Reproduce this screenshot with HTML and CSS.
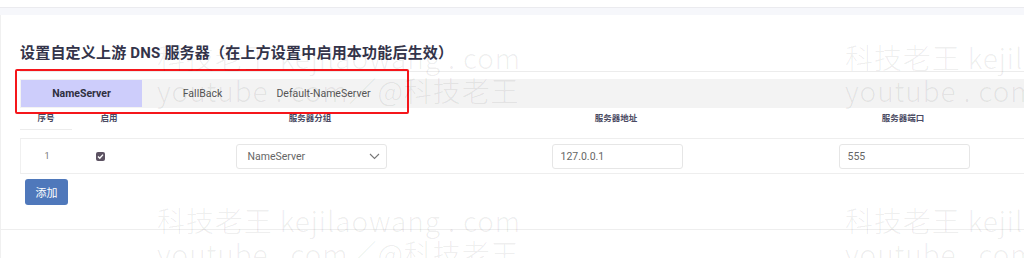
FILE: index.html
```html
<!DOCTYPE html>
<html lang="zh-CN">
<head>
    <meta charset="UTF-8">
    <meta name="viewport" content="width=device-width, initial-scale=1.0">
    <title>上游 DNS 服务器</title>
    <link rel="stylesheet" href="styles.css">
</head>
<body>

    <div class="card card-prev"></div>

    <div class="card card-main">
        <h3 class="section-title">设置自定义上游 DNS 服务器（在上方设置中启用本功能后生效）</h3>

        <div class="tabs-wrap">
            <div class="tabs">
                <div class="tab active">NameServer</div>
                <div class="tab">FallBack</div>
                <div class="tab">Default-NameServer</div>
            </div>
        </div>

        <div class="table">
            <div class="thead">
                <div class="th th-seq">序号</div>
                <div class="th">启用</div>
                <div class="th">服务器分组</div>
                <div class="th">服务器地址</div>
                <div class="th">服务器端口</div>
            </div>
            <div class="row">
                <div class="td td-seq">1</div>
                <div class="td td-check">
                    <span class="checkbox">
                        <svg width="9" height="9" viewBox="0 0 9 9"><path d="M2 4.6 L3.8 6.3 L7 2.6" fill="none" stroke="#fff" stroke-width="1.4"/></svg>
                    </span>
                </div>
                <div class="td">
                    <div class="select">
                        <span>NameServer</span>
                        <svg class="chevron" width="11" height="7" viewBox="0 0 11 7"><path d="M1 1 L5.5 5.5 L10 1" fill="none" stroke="#777" stroke-width="1.1"/></svg>
                    </div>
                </div>
                <div class="td"><input class="field" type="text" value="127.0.0.1"></div>
                <div class="td"><input class="field" type="text" value="555"></div>
            </div>
        </div>

        <button class="btn-add">添加</button>
    </div>

    <div class="card card-next"></div>

    <!-- annotation box round the tabs -->
    <div class="mark-box"></div>

    <!-- watermark layer -->
    <div class="watermark">
        <div class="wm wm-1"><div>科技老王 kejilaowang . com</div><div>youtube . com／@科技老王</div></div>
        <div class="wm wm-2"><div>科技老王 kejilaowang . com</div><div>youtube . com／@科技老王</div></div>
        <div class="wm wm-3"><div>科技老王 kejilaowang . com</div><div>youtube . com／@科技老王</div></div>
        <div class="wm wm-4"><div>科技老王 kejilaowang . com</div><div>youtube . com／@科技老王</div></div>
    </div>

</body>
</html>
```

FILE: styles.css
```css
body {
    margin: 0;
    background-color: #f6f7fb;
    font-family: Roboto, "Noto Sans CJK SC", sans-serif;
    color: #333;
    height: 258px;
    overflow: hidden;
    position: relative;
}

.card {
    background-color: #fff;
    width: 1024px;
    box-sizing: border-box;
    overflow: hidden;
}

.card-prev {
    height: 8px;
    border-bottom: 1px solid #ebebef;
    margin-bottom: 7px;
}

.card-main {
    border-left: 1px solid #f0f0f0;
    border-bottom: 1px solid #eeeeee;
    padding: 28px 0 24px 19px;
}

.card-next {
    height: 40px;
    border-left: 1px solid #f0f0f0;
}

.section-title {
    margin: 0;
    font-size: 15px;
    line-height: 20px;
    font-weight: bold;
    color: #34344a;
    letter-spacing: 0.2px;
}

/* Tabs */
.tabs-wrap {
    margin-top: 8px;
    border-top: 1px solid #ececec;
    padding-top: 7px;
}

.tabs {
    display: flex;
    background-color: #f3f3f3;
    padding: 1px;
    height: 27px;
}

.tab {
    width: 121px;
    display: flex;
    align-items: center;
    justify-content: center;
    font-size: 10.5px;
    color: #555;
}

.tab.active {
    background-color: #cdcdfb;
    color: #2f2f3f;
    font-weight: bold;
}

/* Table */
.table {
    width: 1028px;
}

.thead,
.row {
    display: grid;
    grid-template-columns: 52px 74px 328px 284px 290px;
}

.th {
    height: 21px;
    line-height: 20px;
    text-align: center;
    font-size: 8.5px;
    font-weight: bold;
    color: #4a4a62;
}

.th-seq {
    border-bottom: 1px solid #ececec;
}

.row {
    margin-top: 8px;
    height: 34px;
    border-top: 1px solid #eeeeee;
    border-bottom: 1px solid #eeeeee;
    border-left: 1px solid #f0f0f0;
}

.td {
    display: flex;
    align-items: center;
    justify-content: center;
}

.td-seq {
    font-size: 9px;
    color: #777;
}

.td-check {
    justify-content: flex-start;
    padding-left: 23px;
}

.checkbox {
    width: 9px;
    height: 9px;
    border-radius: 2px;
    background-color: #5c5262;
    display: flex;
}

.select {
    position: relative;
    width: 151px;
    height: 25px;
    box-sizing: border-box;
    border: 1px solid #e6e6e6;
    border-radius: 3px;
    padding-left: 11px;
    display: flex;
    align-items: center;
    font-size: 10.5px;
    color: #666;
}

.chevron {
    position: absolute;
    right: 6px;
    top: 8px;
}

.field {
    width: 131px;
    height: 25px;
    box-sizing: border-box;
    border: 1px solid #e6e6e6;
    border-radius: 3px;
    padding: 0 0 0 8px;
    font-family: Roboto, sans-serif;
    font-size: 10.5px;
    color: #666;
    outline: none;
}

.btn-add {
    margin: 5px 0 0 5px;
    width: 43px;
    height: 26px;
    border: none;
    border-radius: 3px;
    background-color: #4f78bb;
    color: #fff;
    font-family: "Noto Sans CJK SC", sans-serif;
    font-size: 11px;
    padding: 0;
}

/* Red annotation */
.mark-box {
    position: absolute;
    left: 15px;
    top: 69px;
    width: 390px;
    height: 41px;
    border: 2px solid #f5161b;
    border-radius: 2px;
}

/* Watermark */
.watermark {
    position: absolute;
    inset: 0;
    pointer-events: none;
}

.wm {
    position: absolute;
    font-family: "Noto Sans CJK SC", sans-serif;
    font-weight: 300;
    font-size: 28px;
    line-height: 33px;
    letter-spacing: 0.9px;
    color: rgba(0, 0, 0, 0.07);
    white-space: nowrap;
}

.wm-1 { left: 157px; top: 41px; }
.wm-2 { left: 845px; top: 41px; }
.wm-3 { left: 157px; top: 204px; }
.wm-4 { left: 845px; top: 204px; }
```
